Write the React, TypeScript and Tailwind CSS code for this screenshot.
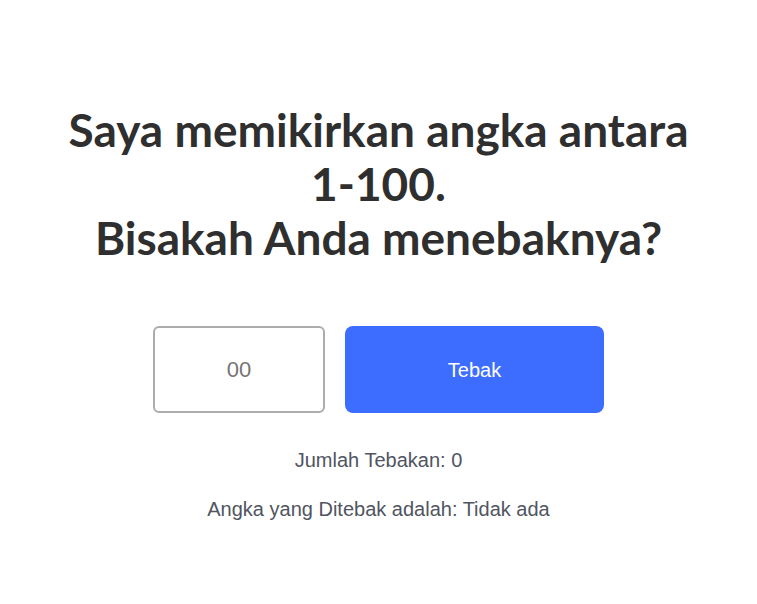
export default function App() {
  return (
    <main className="min-h-screen bg-white flex flex-col items-center pt-[103px] font-['Liberation_Sans',Arial,sans-serif]">
      <h1 className="text-center font-['Lato',sans-serif] font-bold text-[46px] leading-[54px] text-[#2f2f2f]">
        Saya memikirkan angka antara
        <br />
        1-100.
        <br />
        Bisakah Anda menebaknya?
      </h1>

      <div className="mt-[61px] flex gap-5">
        <input
          type="text"
          placeholder="00"
          className="w-[172px] h-[87px] rounded-md border-2 border-[#acacac] text-center text-[22px] text-[#333] placeholder:text-[#757575] outline-none"
        />
        <button className="w-[259px] h-[87px] rounded-lg bg-[#3d6dff] text-white text-xl">
          Tebak
        </button>
      </div>

      <p className="mt-[33px] text-xl leading-7 text-[#50555f]">Jumlah Tebakan: 0</p>
      <p className="mt-[21px] text-xl leading-7 text-[#50555f]">Angka yang Ditebak adalah: Tidak ada</p>
    </main>
  );
}
